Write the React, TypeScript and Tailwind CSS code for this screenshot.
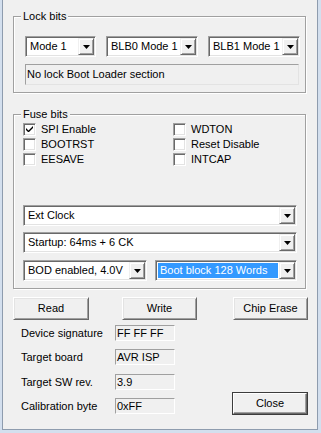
import React from "react";

const sunken =
  "border border-t-[#a0a0a0] border-l-[#a0a0a0] border-b-white border-r-white shadow-[inset_1px_1px_0_#696969,inset_-1px_-1px_0_#e3e3e3]";

function Arrow() {
  return (
    <div className="w-[16px] h-full bg-[#f0f0f0] border border-t-[#f0f0f0] border-l-[#f0f0f0] border-b-[#696969] border-r-[#696969] shadow-[inset_1px_1px_0_#ffffff,inset_-1px_-1px_0_#a0a0a0] flex items-center justify-center">
      <svg width="7" height="4" viewBox="0 0 7 4">
        <path d="M0 0H7L3.5 4Z" fill="#000" />
      </svg>
    </div>
  );
}

function Combo({ text, className, selected }: { text: string; className: string; selected?: boolean }) {
  return (
    <div className={`h-[21px] bg-white p-[1px] flex ${sunken} ${className}`}>
      <div className="flex-1 flex items-center pl-[1px] pr-[1px] overflow-hidden">
        {selected ? (
          <div className="h-[15px] w-full bg-[#3399ff] text-white flex items-center pl-[2px] whitespace-nowrap">{text}</div>
        ) : (
          <div className="pl-[2px] whitespace-nowrap">{text}</div>
        )}
      </div>
      <Arrow />
    </div>
  );
}

function Check({ label, checked }: { label: string; checked?: boolean }) {
  return (
    <div className="h-[15px] flex items-center">
      <div className={`w-[13px] h-[13px] bg-white flex items-center justify-center ${sunken}`}>
        {checked && (
          <svg width="7" height="7" viewBox="0 0 7 7">
            <path d="M0 2L0 4L2 6L3 6L7 2L7 0L2.5 4.5Z" fill="#000" />
          </svg>
        )}
      </div>
      <span className="ml-[5px] whitespace-nowrap">{label}</span>
    </div>
  );
}

function Button({ label, className }: { label: string; className: string }) {
  return (
    <div
      className={`h-[23px] bg-[#f0f0f0] border border-t-white border-l-white border-b-[#696969] border-r-[#696969] shadow-[inset_1px_1px_0_#e3e3e3,inset_-1px_-1px_0_#a0a0a0] flex items-center justify-center ${className}`}
    >
      {label}
    </div>
  );
}

function Field({ label, value, className }: { label: string; value: string; className: string }) {
  return (
    <div className={`flex items-center h-[16px] ${className}`}>
      <div className="w-[94px] whitespace-nowrap">{label}</div>
      <div className="w-[60px] h-[16px] bg-[#f0f0f0] border border-t-[#a0a0a0] border-l-[#a0a0a0] border-b-white border-r-white flex items-center pl-[1px] whitespace-nowrap leading-none">
        {value}
      </div>
    </div>
  );
}

function Group({ title, className, children }: { title: string; className: string; children: React.ReactNode }) {
  return (
    <div className={`relative border border-[#a0a0a0] shadow-[inset_1px_1px_0_#ffffff,1px_1px_0_#ffffff] ${className}`}>
      <div className="absolute left-[7px] top-[-8px] px-[2px] bg-[#f0f0f0] leading-[14px]">{title}</div>
      {children}
    </div>
  );
}

export default function App() {
  return (
    <div className="w-[321px] h-[433px] bg-[#d3dfee] pl-[2px] text-[11px] text-black [font-family:'Liberation_Sans',Arial,sans-serif] overflow-hidden">
      <div className="w-[316px] h-[430px] bg-[#f0f0f0] border-l border-r border-b border-[#8e9cae] flex flex-col">
        <Group title="Lock bits" className="ml-[10px] mt-[16px] w-[293px] h-[77px] pt-[19px] pl-[11px]">
          <div className="flex gap-[10px]">
            <Combo text="Mode 1" className="w-[71px]" />
            <Combo text="BLB0 Mode 1" className="w-[92px]" />
            <Combo text="BLB1 Mode 1" className="w-[92px]" />
          </div>
          <div className="mt-[7px] w-[274px] h-[21px] bg-[#f0f0f0] border border-[#a0a0a0] border-b-[#e3e3e3] border-r-[#e3e3e3] flex items-center pl-[1px] whitespace-nowrap">
            No lock Boot Loader section
          </div>
        </Group>

        <Group title="Fuse bits" className="ml-[10px] mt-[21px] w-[293px] h-[175px] pt-[7px] pl-[9px]">
          <div className="flex">
            <div className="w-[150px] flex flex-col">
              <Check label="SPI Enable" checked />
              <Check label="BOOTRST" />
              <Check label="EESAVE" />
            </div>
            <div className="flex flex-col">
              <Check label="WDTON" />
              <Check label="Reset Disable" />
              <Check label="INTCAP" />
            </div>
          </div>
          <Combo text="Ext Clock" className="mt-[38px] w-[274px]" />
          <Combo text="Startup: 64ms + 6 CK" className="mt-[6px] w-[274px]" />
          <div className="mt-[7px] flex gap-[8px]">
            <Combo text="BOD enabled, 4.0V" className="w-[124px]" />
            <Combo text="Boot block 128 Words" className="w-[142px]" selected />
          </div>
        </Group>

        <div className="mt-[8px] ml-[10px] flex">
          <Button label="Read" className="w-[76px]" />
          <Button label="Write" className="ml-[33px] w-[75px]" />
          <Button label="Chip Erase" className="ml-[36px] w-[75px]" />
        </div>

        <div className="mt-[5px] ml-[18px] flex items-end">
          <div className="flex flex-col">
            <Field label="Device signature" value="FF FF FF" className="" />
            <Field label="Target board" value="AVR ISP" className="mt-[8px]" />
            <Field label="Target SW rev." value="3.9" className="mt-[9px]" />
            <Field label="Calibration byte" value="0xFF" className="mt-[8px]" />
          </div>
          <div className="ml-[57px] mb-[-1px] w-[76px] h-[23px] border border-[#3c3c3c] flex">
            <div className="flex-1 bg-[#f0f0f0] border border-t-white border-l-white border-b-[#696969] border-r-[#696969] shadow-[inset_-1px_-1px_0_#a0a0a0] flex items-center justify-center">
              Close
            </div>
          </div>
        </div>
      </div>
    </div>
  );
}
